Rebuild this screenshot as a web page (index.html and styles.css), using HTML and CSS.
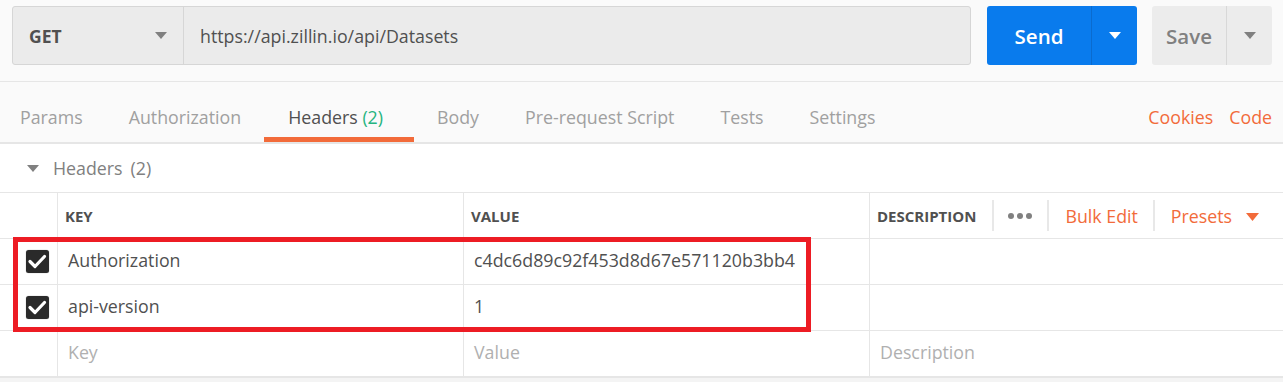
FILE: index.html
```html
<!DOCTYPE html>
<html lang="en">
<head>
<meta charset="utf-8">
<title>Headers</title>
<link rel="stylesheet" href="styles.css">
</head>
<body>
<div class="app">
  <div class="request-bar">
    <div class="url-group">
      <div class="method">
        <span class="method-name">GET</span>
        <svg class="caret" width="12" height="7" viewBox="0 0 12 7"><polygon points="0,0 12,0 6,7" fill="#808080"/></svg>
      </div>
      <div class="url">https://api.zillin.io/api/Datasets</div>
    </div>
    <div class="send-btn">
      <span class="send-label">Send</span>
      <span class="send-caret"><svg width="12" height="7" viewBox="0 0 12 7"><polygon points="0,0 12,0 6,7" fill="#ffffff"/></svg></span>
    </div>
    <div class="save-btn">
      <span class="save-label">Save</span>
      <span class="save-caret"><svg width="12" height="7" viewBox="0 0 12 7"><polygon points="0,0 12,0 6,7" fill="#808080"/></svg></span>
    </div>
  </div>

  <div class="tabs">
    <div class="tab-list">
      <span class="tab tab-first">Params</span>
      <span class="tab">Authorization</span>
      <span class="tab tab-active">Headers <span class="count">(2)</span></span>
      <span class="tab">Body</span>
      <span class="tab">Pre-request Script</span>
      <span class="tab">Tests</span>
      <span class="tab">Settings</span>
    </div>
    <div class="tab-links">
      <span class="link">Cookies</span>
      <span class="link">Code</span>
    </div>
  </div>

  <div class="section-head">
    <svg class="section-caret" width="12" height="7" viewBox="0 0 12 7"><polygon points="0,0 12,0 6,7" fill="#808080"/></svg>
    <span class="section-title">Headers</span>
    <span class="section-count">(2)</span>
  </div>

  <div class="kv-table">
    <div class="kv-row kv-head">
      <div class="cell cell-check"></div>
      <div class="cell">KEY</div>
      <div class="cell">VALUE</div>
      <div class="cell cell-desc">
        <span class="desc-label">DESCRIPTION</span>
        <span class="vsep"></span>
        <span class="dots"><i></i><i></i><i></i></span>
        <span class="vsep"></span>
        <span class="link">Bulk Edit</span>
        <span class="vsep"></span>
        <span class="link presets">Presets
          <svg width="13" height="8" viewBox="0 0 13 8"><polygon points="0,0 13,0 6.5,8" fill="#f26b3a"/></svg>
        </span>
      </div>
    </div>
    <div class="kv-row">
      <div class="cell cell-check">
        <svg class="checkbox" width="25" height="25" viewBox="0 0 25 25"><rect x="0.5" y="0.5" width="24" height="24" rx="3" fill="#e6e6e6"/><rect x="1" y="1" width="23" height="23" rx="2.5" fill="#2a2a2a"/><polyline points="5,12.5 10,17.5 19.5,7.5" fill="none" stroke="#ffffff" stroke-width="3.2" stroke-linecap="round" stroke-linejoin="round"/></svg>
      </div>
      <div class="cell cell-text">Authorization</div>
      <div class="cell cell-text">c4dc6d89c92f453d8d67e571120b3bb4</div>
      <div class="cell"></div>
    </div>
    <div class="kv-row">
      <div class="cell cell-check">
        <svg class="checkbox" width="25" height="25" viewBox="0 0 25 25"><rect x="0.5" y="0.5" width="24" height="24" rx="3" fill="#e6e6e6"/><rect x="1" y="1" width="23" height="23" rx="2.5" fill="#2a2a2a"/><polyline points="5,12.5 10,17.5 19.5,7.5" fill="none" stroke="#ffffff" stroke-width="3.2" stroke-linecap="round" stroke-linejoin="round"/></svg>
      </div>
      <div class="cell cell-text">api-version</div>
      <div class="cell cell-text">1</div>
      <div class="cell"></div>
    </div>
    <div class="kv-row kv-last">
      <div class="cell cell-check"></div>
      <div class="cell cell-text placeholder">Key</div>
      <div class="cell cell-text placeholder">Value</div>
      <div class="cell cell-text placeholder">Description</div>
    </div>
    <div class="highlight"></div>
  </div>
</div>
</body>
</html>
```

FILE: styles.css
```css
* { box-sizing: border-box; }

html, body {
  margin: 0;
  padding: 0;
}

body {
  background: #f4f4f4;
  font-family: "Open Sans", "Liberation Sans", sans-serif;
  color: #505050;
  width: 1283px;
  height: 382px;
  overflow: hidden;
}

.app {
  display: flex;
  flex-direction: column;
}

/* ---------- request bar ---------- */
.request-bar {
  display: flex;
  align-items: stretch;
  gap: 16px;
  height: 82px;
  padding: 6px 11px 16px 12px;
  background: #fafafa;
  border-bottom: 1px solid #e6e6e6;
}

.url-group {
  display: flex;
  width: 959px;
  height: 59px;
  background: #ebebeb;
  border: 1px solid #d6d6d6;
  border-radius: 3px;
}

.method {
  display: flex;
  align-items: center;
  justify-content: space-between;
  width: 171px;
  padding: 0 16px 0 16px;
  border-right: 1px solid #d6d6d6;
}

.method-name {
  font-size: 17.5px;
  font-weight: 700;
  color: #505050;
}

.url {
  display: flex;
  align-items: center;
  padding-left: 16px;
  font-size: 17.8px;
  color: #505050;
}

.send-btn {
  display: flex;
  width: 150px;
  height: 59px;
  background: #097bed;
  border-radius: 3px;
  color: #ffffff;
}

.send-label {
  display: flex;
  align-items: center;
  justify-content: center;
  width: 105px;
  font-size: 20.5px;
  font-weight: 600;
  border-right: 1px solid #0a6bcf;
}

.send-caret, .save-caret {
  display: flex;
  align-items: center;
  justify-content: center;
  flex: 1;
}

.save-btn {
  display: flex;
  width: 120px;
  height: 59px;
  background: #ececec;
  border-radius: 3px;
  margin-left: -1px;
}

.save-label {
  display: flex;
  align-items: center;
  justify-content: center;
  width: 75px;
  font-size: 20.5px;
  font-weight: 600;
  color: #808080;
  border-right: 1px solid #d8d8d8;
}

/* ---------- tabs ---------- */
.tabs {
  display: flex;
  justify-content: space-between;
  height: 62px;
  background: #fafafa;
  border-bottom: 2px solid #e6e6e6;
}

.tab-list {
  display: flex;
}

.tab {
  height: 60px;
  padding: 23px 23px 0 23px;
  font-size: 17.8px;
  line-height: 24px;
  color: #a0a0a0;
  border-bottom: 5px solid transparent;
  white-space: nowrap;
}

.tab-first {
  padding-left: 20px;
}

.tab-active {
  padding-left: 24px;
  padding-right: 31px;
  color: #505050;
  border-bottom-color: #f26b3a;
}

.count {
  color: #26b47f;
}

.tab-links {
  display: flex;
  gap: 16px;
  padding: 23px 11px 0 0;
  font-size: 17.8px;
  line-height: 24px;
}

.link {
  color: #f26b3a;
  white-space: nowrap;
}

/* ---------- section head ---------- */
.section-head {
  display: flex;
  align-items: center;
  height: 48px;
  padding-left: 27px;
  background: #ffffff;
  font-size: 17.8px;
  line-height: 24px;
  color: #808080;
}

.section-caret {
  margin-right: 14px;
  margin-top: 1px;
}

.section-count {
  margin-left: 8px;
}

/* ---------- key/value table ---------- */
.kv-table {
  position: relative;
  background: #ffffff;
  border-top: 1px solid #e6e6e6;
}

.kv-row {
  display: grid;
  grid-template-columns: 57px 406px 406px 1fr;
  height: 46px;
  border-bottom: 1px solid #e6e6e6;
}

.kv-last {
  height: 47px;
  border-bottom: 2px solid #e6e6e6;
}

.cell {
  display: flex;
  align-items: center;
  border-left: 1px solid #e6e6e6;
  padding-left: 10px;
  font-size: 17.8px;
  line-height: 24px;
  color: #505050;
  white-space: nowrap;
  overflow: hidden;
}

.cell-check {
  border-left: none;
  padding-left: 25px;
}

.kv-head .cell {
  padding-left: 7px;
  font-size: 15px;
  font-weight: 700;
  color: #505050;
}

.kv-head .cell-desc {
  padding-left: 7px;
}

.desc-label {
  margin-right: 16px;
}

.kv-head .link {
  font-size: 17.8px;
  font-weight: 400;
}

.vsep {
  width: 2px;
  height: 31px;
  background: #e8e8e8;
}

.dots {
  display: flex;
  gap: 3px;
  margin: 0 15px 0 14px;
}

.dots i {
  display: block;
  width: 6px;
  height: 6px;
  border-radius: 50%;
  background: #808080;
}

.vsep + .link {
  margin-left: 16px;
  margin-right: 15px;
}

.presets {
  display: flex;
  align-items: center;
  gap: 14px;
}

.presets svg {
  margin-top: 2px;
}

.placeholder {
  color: #b0b0b0;
}

.cell-text {
  padding-left: 10px;
  padding-bottom: 3px;
}

/* red annotation frame drawn over the two header rows */
.highlight {
  position: absolute;
  left: 13px;
  top: 44px;
  width: 798px;
  height: 95px;
  border: 5px solid #ed1c24;
  pointer-events: none;
}
```
